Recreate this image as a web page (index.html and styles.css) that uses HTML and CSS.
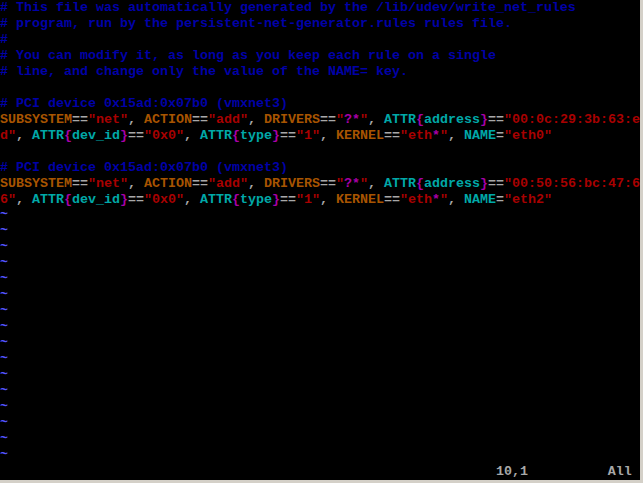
FILE: index.html
```html
<!DOCTYPE html>
<html>
<head>
<meta charset="utf-8">
<link rel="stylesheet" href="styles.css">
</head>
<body>
<div class="screen">
<div class="row c"># This file was automatically generated by the /lib/udev/write_net_rules</div>
<div class="row c"># program, run by the persistent-net-generator.rules rules file.</div>
<div class="row c">#</div>
<div class="row c"># You can modify it, as long as you keep each rule on a single</div>
<div class="row c"># line, and change only the value of the NAME= key.</div>
<div class="row"></div>
<div class="row c"># PCI device 0x15ad:0x07b0 (vmxnet3)</div>
<div class="row"><span class="k">SUBSYSTEM</span><span class="g">==</span><span class="s">"net"</span><span class="g">, </span><span class="k">ACTION</span><span class="g">==</span><span class="s">"add"</span><span class="g">, </span><span class="k">DRIVERS</span><span class="g">==</span><span class="s">"</span><span class="m">?*</span><span class="s">"</span><span class="g">, </span><span class="a">ATTR</span><span class="m">{</span><span class="a">address</span><span class="m">}</span><span class="g">==</span><span class="s">"00:0c:29:3b:63:e</span></div>
<div class="row"><span class="s">d"</span><span class="g">, </span><span class="a">ATTR</span><span class="m">{</span><span class="a">dev_id</span><span class="m">}</span><span class="g">==</span><span class="s">"0x0"</span><span class="g">, </span><span class="a">ATTR</span><span class="m">{</span><span class="a">type</span><span class="m">}</span><span class="g">==</span><span class="s">"1"</span><span class="g">, </span><span class="k">KERNEL</span><span class="g">==</span><span class="s">"eth</span><span class="m">*</span><span class="s">"</span><span class="g">, </span><span class="a">NAME</span><span class="g">=</span><span class="s">"eth0"</span></div>
<div class="row"></div>
<div class="row c"># PCI device 0x15ad:0x07b0 (vmxnet3)</div>
<div class="row"><span class="k">SUBSYSTEM</span><span class="g">==</span><span class="s">"net"</span><span class="g">, </span><span class="k">ACTION</span><span class="g">==</span><span class="s">"add"</span><span class="g">, </span><span class="k">DRIVERS</span><span class="g">==</span><span class="s">"</span><span class="m">?*</span><span class="s">"</span><span class="g">, </span><span class="a">ATTR</span><span class="m">{</span><span class="a">address</span><span class="m">}</span><span class="g">==</span><span class="s">"00:50:56:bc:47:6</span></div>
<div class="row"><span class="s">6"</span><span class="g">, </span><span class="a">ATTR</span><span class="m">{</span><span class="a">dev_id</span><span class="m">}</span><span class="g">==</span><span class="s">"0x0"</span><span class="g">, </span><span class="a">ATTR</span><span class="m">{</span><span class="a">type</span><span class="m">}</span><span class="g">==</span><span class="s">"1"</span><span class="g">, </span><span class="k">KERNEL</span><span class="g">==</span><span class="s">"eth</span><span class="m">*</span><span class="s">"</span><span class="g">, </span><span class="a">NAME</span><span class="g">=</span><span class="s">"eth2"</span></div>
<div class="row t">~</div>
<div class="row t">~</div>
<div class="row t">~</div>
<div class="row t">~</div>
<div class="row t">~</div>
<div class="row t">~</div>
<div class="row t">~</div>
<div class="row t">~</div>
<div class="row t">~</div>
<div class="row t">~</div>
<div class="row t">~</div>
<div class="row t">~</div>
<div class="row t">~</div>
<div class="row t">~</div>
<div class="row t">~</div>
<div class="row t">~</div>
<div class="row g">                                                              10,1          All</div>
</div>
</body>
</html>
```
FILE: styles.css
```css
html, body {
  margin: 0;
  padding: 0;
  background: #d4d0c8;
}
.screen {
  width: 640px;
  height: 480px;
  background: #000;
  overflow: hidden;
  font-family: "Liberation Mono", "DejaVu Sans Mono", monospace;
  font-size: 13.333px;
  font-weight: bold;
  color: #a8a8a8;
}
.row {
  height: 16px;
  line-height: 16px;
  white-space: pre;
}
.c { color: #0000a8; }
.k { color: #a85400; }
.g { color: #a8a8a8; }
.s { color: #a80000; }
.m { color: #a800a8; }
.a { color: #00a8a8; }
.t {
  color: #5454fc;
  line-height: 13px;
}
```
